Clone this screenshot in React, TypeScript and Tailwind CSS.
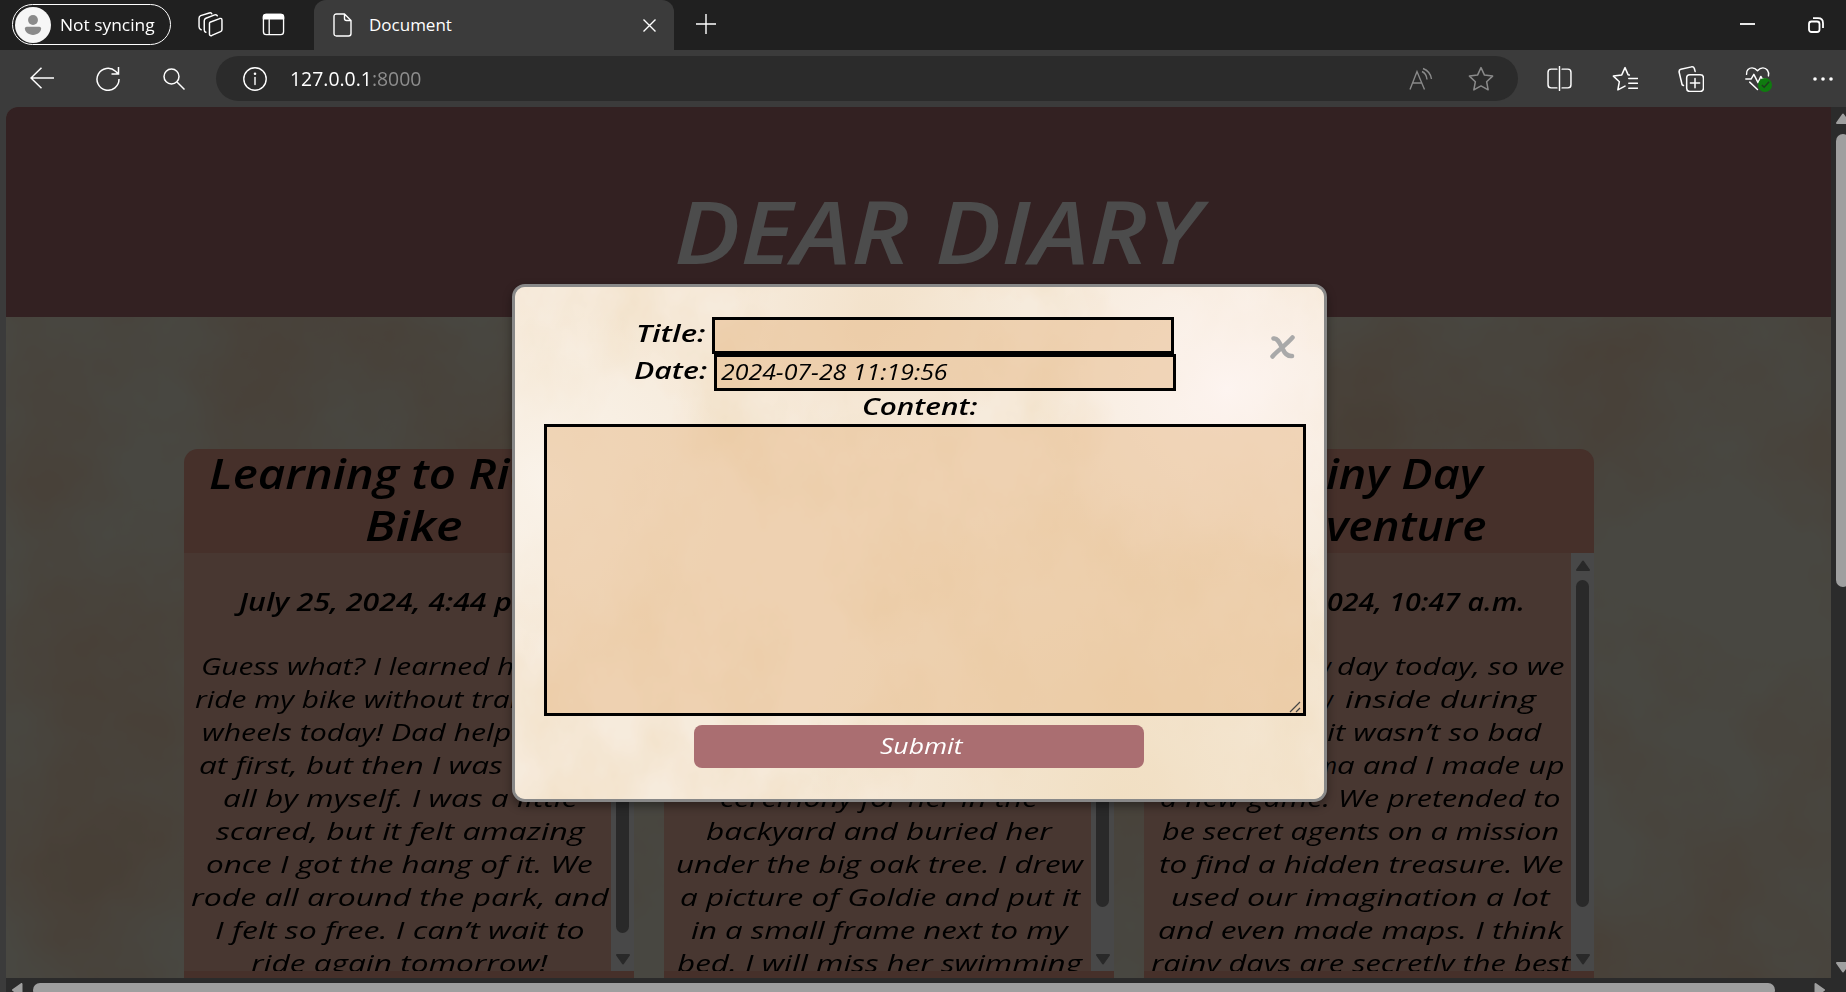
import { useLayoutEffect, useRef, type ReactNode } from "react";

type Seg = { t: string; w: number; x?: number; before?: string; after?: string };

/* Stretches one line of lettering to the given advance width. */
function Fit({ w, children }: { w: number; children: ReactNode }) {
  const ref = useRef<HTMLSpanElement>(null);
  useLayoutEffect(() => {
    const el = ref.current;
    if (el) el.style.transform = `scaleX(${w / el.offsetWidth})`;
  }, [w]);
  return (
    <span className="inline-block shrink-0 whitespace-pre" style={{ width: w }}>
      <span ref={ref} className="inline-block origin-left whitespace-pre">{children}</span>
    </span>
  );
}

function Line({ s, className }: { s: Seg; className: string }) {
  const side = s.before ? "justify-end" : s.after ? "justify-start" : "justify-center";
  return (
    <div className={`flex whitespace-pre ${side} ${className}`} style={s.before ? { paddingRight: s.x } : { paddingLeft: s.x }}>
      {s.before && <span>{s.before}</span>}
      <Fit w={s.w}>{s.t}</Fit>
      {s.after && <span>{s.after}</span>}
    </div>
  );
}

function Texture({ id, seed, matrix, freq }: { id: string; seed: number; matrix: string; freq: string }) {
  return (
    <svg className="pointer-events-none absolute inset-0 size-full" aria-hidden="true">
      <filter id={id} x="0" y="0" width="100%" height="100%" colorInterpolationFilters="sRGB">
        <feTurbulence type="fractalNoise" baseFrequency={freq} numOctaves="5" seed={seed} />
        <feColorMatrix type="matrix" values={matrix} />
      </filter>
      <rect width="100%" height="100%" filter={`url(#${id})`} />
    </svg>
  );
}

type Card = { head: Seg[]; date: Seg; lines: Seg[]; thumb: string };

const cards: Card[] = [
  {
    head: [{ t: "Learning to Ri", w: 301, x: 25, after: "de a" }, { t: "Bike", w: 98, x: 10 }],
    date: { t: "July 25, 2024, 4:44 p", w: 273, x: 55, after: ".m." },
    lines: [
      { t: "Guess what? I learned h", w: 313, x: 17, after: "ow to" },
      { t: "ride my bike without tra", w: 315, x: 11, after: "ining" },
      { t: "wheels today! Dad help", w: 309, x: 18, after: "ed me" },
      { t: "at first, but then I was", w: 304, x: 15, after: "  riding" },
      { t: "all by myself. I was a little", w: 354, x: 4 },
      { t: "scared, but it felt amazing", w: 368, x: 4 },
      { t: "once I got the hang of it. We", w: 387, x: 4 },
      { t: "rode all around the park, and", w: 418, x: 5 },
      { t: "I felt so free. I can’t wait to", w: 369, x: 4 },
      { t: "ride again tomorrow!", w: 296, x: 2 },
    ],
    thumb: "h-[353px]",
  },
  {
    head: [{ t: "Goodbye,", w: 200 }, { t: "Goldie", w: 140 }],
    date: { t: "July 26, 2024, 5:12 p.m.", w: 320 },
    lines: [
      { t: "Today was a sad day. My", w: 340 },
      { t: "goldfish, Goldie, died. I", w: 340 },
      { t: "came home from school", w: 340 },
      { t: "and found her. We had a", w: 340 },
      { t: "ceremony for her in the", w: 318, x: 3 },
      { t: "backyard and buried her", w: 346, x: 3 },
      { t: "under the big oak tree. I drew", w: 407, x: 3 },
      { t: "a picture of Goldie and put it", w: 400, x: 4 },
      { t: "in a small frame next to my", w: 377, x: 3 },
      { t: "bed. I will miss her swimming", w: 405, x: 4 },
    ],
    thumb: "h-[327px]",
  },
  {
    head: [{ t: "iny Day", w: 157, x: 111, before: "A Ra" }, { t: "venture", w: 161, x: 107, before: "Ad" }],
    date: { t: "024, 10:47 a.m.", w: 198, x: 46, before: "July 27, 2" },
    lines: [
      { t: "day today, so we", w: 227, x: 7, before: "It was a rainy " },
      { t: "inside during", w: 191, x: 35, before: "had to stay  " },
      { t: "it wasn’t so bad", w: 214, x: 30, before: "recess. But  " },
      { t: "a and I made up", w: 228, x: 6, before: "because Emm" },
      { t: "a new game. We pretended to", w: 401, x: 5 },
      { t: "be secret agents on a mission", w: 397, x: 6 },
      { t: "to find a hidden treasure. We", w: 404, x: 6 },
      { t: "used our imagination a lot", w: 379, x: 6 },
      { t: "and even made maps. I think", w: 405, x: 5 },
      { t: "rainy days are secretly the best", w: 420, x: 6 },
    ],
    thumb: "h-[327px]",
  },
];

function Tri({ className, d }: { className: string; d: string }) {
  return (
    <svg viewBox="0 0 14 11" className={className} fill="currentColor" stroke="currentColor" strokeWidth="2" strokeLinejoin="round">
      <path d={d} />
    </svg>
  );
}
const UP = "M7 1.5 13 10H1z";
const DOWN = "M7 9.5 13 1H1z";

function DiaryCard({ c }: { c: Card }) {
  return (
    <section className="flex h-[529px] w-[450px] shrink-0 flex-col overflow-hidden rounded-t-[14px] bg-[#46302a]">
      <header className="h-[104px] overflow-hidden text-[41px] font-semibold">
        {c.head.map((s) => <Line key={s.t} s={s} className="h-[52px] leading-[48px]" />)}
      </header>
      <div className="flex h-[418px] overflow-hidden">
        <div className="w-[427px] overflow-hidden bg-[#483932]/90 pt-[30px]">
          <Line s={c.date} className="h-[72px] text-[25px] leading-[36px] font-semibold" />
          {c.lines.map((s) => <Line key={s.t} s={s} className="h-[33px] text-[23.5px] leading-[23px]" />)}
        </div>
        <div className="flex w-[23px] flex-col items-center bg-[#484848] pt-[7px] pb-[6px] text-[#292929]">
          <Tri className="h-[11px] w-[14px] shrink-0" d={UP} />
          <div className={`mt-[9px] w-[13px] shrink-0 rounded-full bg-[#292929] ${c.thumb}`} />
          <Tri className="mt-auto h-[11px] w-[14px] shrink-0" d={DOWN} />
        </div>
      </div>
    </section>
  );
}

function Icon({ className, children, w = 24 }: { className?: string; children: ReactNode; w?: number }) {
  return (
    <svg viewBox={`0 0 ${w} 24`} className={`shrink-0 ${className ?? ""}`} fill="none" stroke="currentColor" strokeWidth="1.4" strokeLinecap="round" strokeLinejoin="round">
      {children}
    </svg>
  );
}
const STAR = "M12 1.5 15.2 8.4 22.7 9.3 17.2 14.5 18.6 22 12 18.4 5.4 22 6.8 14.5 1.3 9.3 8.8 8.4z";

function Chrome() {
  return (
    <>
      <div className="flex h-[50px] bg-[#202020] text-white">
        <div className="mt-[4px] ml-[12px] flex h-[41px] w-[159px] items-center rounded-full border-[1.5px] border-white pl-[2px]">
          <span className="flex size-[36px] items-center justify-center rounded-full bg-[#f6f6f6]">
            <svg viewBox="0 0 20 22" className="h-[22px] w-[18px]" fill="#8a8a8a"><circle cx="10" cy="5.5" r="5.5" /><path d="M1 15q0-2 2-2h14q2 0 2 2c0 4-4 7-9 7s-9-3-9-7z" /></svg>
          </span>
          <span className="ml-[9px]"><Fit w={95}><span className="font-['Open_Sans','Noto_Sans',sans-serif] text-[17px]">Not syncing</span></Fit></span>
        </div>
        <Icon className="mt-[12px] ml-[27px] size-[25px]">
          <path d="M11.500 9.800 20.800 6.300Q23 5.600 23 7.800V16.800Q23 18.300 21.600 18.900L13.300 22.500Q11 23.300 11 21V11.200Q11 10.200 11.500 9.800z" />
          <path d="M7.500 19.500Q6 19 6 17V8.500q0-1.800 1.600-2.500L16 2.800q2-.6 2.500.9M3 17Q1 16.300 1 14.200V6q0-1.800 1.600-2.500L10.800.9q2-.6 2.500.9" />
        </Icon>
        <Icon className="mt-[13px] ml-[39px] size-[23px]">
          <rect x="1.500" y="1.500" width="21" height="21" rx="3" /><path d="M1.500 6V4q0-2.500 2.500-2.500h16q2.500 0 2.500 2.500v2z" fill="currentColor" /><path d="M7.500 7v15" />
        </Icon>
        <div className="ml-[29px] flex h-[50px] w-[360px] items-center rounded-t-[12px] bg-[#3b3b3b]">
          <Icon className="ml-[19px] h-[24px] w-[19px]" w={19}><path d="M3.500 1H11.500L18 7.500V20.500Q18 23 15.500 23H3.500Q1 23 1 20.500V3.500Q1 1 3.500 1zM11.500 1V5.500q0 2 2 2H18" /></Icon>
          <span className="ml-[17px]"><Fit w={83}><span className="font-['Open_Sans','Noto_Sans',sans-serif] text-[17px]">Document</span></Fit></span>
          <svg viewBox="0 0 13 13" className="ml-[191px] size-[13px]" stroke="white" strokeWidth="1.400"><path d="m.5.5 12 12m0-12-12 12" /></svg>
        </div>
        <svg viewBox="0 0 20 20" className="mt-[14px] ml-[22px] size-[20px]" stroke="white" strokeWidth="1.400"><path d="M10 0v20M0 10h20" /></svg>
        <svg viewBox="0 0 15 16" className="mt-[16px] ml-auto h-[16px] w-[15px]" stroke="white" strokeWidth="1.800"><path d="M0 8h15" /></svg>
        <svg viewBox="0 0 16 16" className="mt-[17px] mr-[22px] ml-[53px] size-[16px]" fill="none" stroke="white" strokeWidth="1.800"><rect x="1" y="4.500" width="10.500" height="10.500" rx="2.500" /><path d="M5 1.200h5q5 0 5 5V11" /></svg>
      </div>
      <div className="flex h-[57px] items-center bg-[#3b3b3b] text-white">
        <svg viewBox="0 0 24 22" className="-mt-px ml-[30px] h-[22px] w-[24px]" fill="none" stroke="white" strokeWidth="1.500"><path d="M24 11H1M11.500.7 1 11l10.500 10.300" /></svg>
        <svg viewBox="0 0 24 24" className="ml-[42px] size-[24px]" fill="none" stroke="white" strokeWidth="1.500"><path d="M23 12A11 11 0 1 1 19.500 4.200L22.500 7M22.500 0v7h-7" /></svg>
        <svg viewBox="0 0 22 22" className="ml-[43px] size-[22px]" fill="none" stroke="white" strokeWidth="1.500"><circle cx="8.500" cy="8.500" r="7.500" /><path d="m14 14 7.500 7.500" /></svg>
        <div className="ml-[31px] flex h-[45px] w-[1302px] items-center rounded-full bg-[#2b2b2b]">
          <Icon className="ml-[27px] size-[24px]"><circle cx="12" cy="12" r="11.200" /><path d="M12 10.500v7" /><circle cx="12" cy="6.800" r=".6" fill="currentColor" /></Icon>
          <span className="ml-[23px]"><Fit w={131}><span className="font-['Open_Sans','Noto_Sans',sans-serif] text-[20px]">127.0.0.1<span className="text-[#8d8d8d]">:8000</span></span></Fit></span>
          <svg viewBox="0 0 24 24" className="ml-auto size-[24px]" fill="none" stroke="#8a8a8a" strokeWidth="1.400"><path d="m1 22.500 7-18 7.500 18M3.500 16h9.500M13 4.500q4.500 2 5 8M14 1.500q7.500 3 8.500 10.500" /></svg>
          <Icon className="mr-[24px] ml-[35px] size-[26px] text-[#8a8a8a]"><path d={STAR} /></Icon>
        </div>
        <Icon className="ml-[29px] size-[25px]"><path d="M9.500 3H4Q1 3 1 6v12q0 3 3 3h5.500M14.500 3H20q3 0 3 3v12q0 3-3 3h-5.500M12 .5v23" /></Icon>
        <Icon className="ml-[40px] size-[26px]"><path d="M16 8.300 14.800 8 12 1.500 9 8.200 1.300 9.300 6.800 14.500 5.400 22 12 18.600M15.500 11.500h8M15.500 16h8M15.500 20.500h8" /></Icon>
        <Icon className="ml-[40px] size-[26px]"><rect x="8" y="8" width="15.500" height="15.500" rx="3" /><path d="M15.700 11.500v8.500M11.500 15.700H20M5 18 3.800 17.300 1 5.500Q.8 3.500 2.600 3L12.500.8q2-.3 2.600 1.500l.7 2.700" /></Icon>
        <div className="relative ml-[41px] size-[26px]">
          <Icon className="size-[25px]"><path d="M1.500 8C1 4 4 1.800 6.800 1.800Q9.700 1.800 12 4.500q2.300-2.700 5.200-2.700c3.500 0 6.300 3.400 5.300 7.700M.8 12.500h5l2.700-4.500 4 8 2.700-6 1.500 2.500h3M4.500 15.500 12 22.500" /></Icon>
          <span className="absolute top-[12px] left-[13px] flex size-[14px] items-center justify-center rounded-full bg-[#0f7b0f]"><svg viewBox="0 0 10 10" className="size-[9px]" fill="none" stroke="#1f3a1f" strokeWidth="1.600"><path d="m1 5.500 2.500 2.500L9 2" /></svg></span>
        </div>
        <svg viewBox="0 0 20 4" className="ml-[42px] h-[4px] w-[20px] shrink-0" fill="white"><circle cx="2" cy="2" r="1.800" /><circle cx="10" cy="2" r="1.800" /><circle cx="18" cy="2" r="1.800" /></svg>
      </div>
    </>
  );
}

const FIELD = "border-[3px] border-black bg-[#e5b785]/50";

function Modal() {
  return (
    <div className="absolute top-[284px] left-[512px] h-[518px] w-[815px] overflow-hidden rounded-[13px] border-[3px] border-[#888] bg-[#f6eadb] text-black shadow-[0_4px_10px_rgba(0,0,0,.4)]">
      <Texture id="paper" seed={8} freq="0.012 0.009" matrix="0 0 0 0 .92  0 0 0 0 .82  0 0 0 0 .66  0 2 0 0 -.8" />
      <div className="absolute inset-0 bg-[#f7ebdc]/60" />
      <div className="absolute inset-0 bg-[radial-gradient(circle_at_88%_20%,#fdf4f0_0,transparent_24%),radial-gradient(circle_at_4%_38%,#faf3ea_0,transparent_22%),radial-gradient(circle_at_75%_100%,#f1dfc3_0,transparent_40%),radial-gradient(circle_at_45%_5%,#f3e2cb_0,transparent_22%)]" />
      <div className="relative flex h-full flex-col">
        <div className="mt-[30px] flex h-[37px] items-start pl-[121px]">
          <span className="text-[24px] leading-[32px] font-semibold"><Fit w={70}>Title:</Fit></span>
          <div className={`ml-[6px] h-[37px] w-[462px] ${FIELD}`} />
        </div>
        <div className="flex h-[37px] items-start pl-[119px]">
          <span className="text-[24px] leading-[32px] font-semibold"><Fit w={73}>Date:</Fit></span>
          <div className={`ml-[7px] h-[37px] w-[462px] pl-[4px] text-[21.5px] leading-[29px] ${FIELD}`}><Fit w={227}>2024-07-28 11:19:56</Fit></div>
        </div>
        <div className="h-[33px] pl-[347px] text-[24px] leading-[29px] font-semibold"><Fit w={115}>Content:</Fit></div>
        <div className={`ml-[29px] flex h-[292px] w-[762px] items-end justify-end ${FIELD}`}>
          <svg viewBox="0 0 12 12" className="mr-[2px] size-[12px]" stroke="#444" strokeWidth="1.200"><path d="M1 11 11 1M7 11l4-4" /></svg>
        </div>
        <div className="mt-[9px] ml-[179px] flex h-[43px] w-[450px] justify-center rounded-[8px] bg-[#aa6e71] text-[22px] leading-[40px] text-white"><span className="pl-[3px]"><Fit w={82}>Submit</Fit></span></div>
      </div>
      <svg viewBox="0 0 26 24" className="absolute top-[48px] left-[755px] h-[24px] w-[26px]" fill="none" stroke="#a9a9a9" strokeWidth="4.500" strokeLinecap="round"><path d="M2.500 21.500C7 16 15 11 22.500 2.500M3.500 3.500C8 2.500 10 9 13 14.500Q16 21.500 22 21" /></svg>
    </div>
  );
}

export default function App() {
  return (
    <main className="relative h-[992px] w-[1846px] overflow-hidden bg-[#3b3b3b] font-['Open_Sans','Noto_Sans',sans-serif]">
      <Chrome />
      <div className="flex h-[871px] pl-[6px]">
        <div className="relative w-[1825px] overflow-hidden rounded-tl-[12px] bg-[#484741] text-black italic">
          <Texture id="page" seed={3} freq="0.005 0.005" matrix="0 0 0 0 .28  0 0 0 0 .245  0 0 0 0 .21  0 2 0 0 -.75" />
          <div className="relative">
            <h1 className="flex h-[210px] justify-center bg-[#332122] pt-[64px] text-[87px] leading-[118px] font-semibold text-[#4c4c4c]"><span className="pl-[36px]"><Fit w={526}>DEAR DIARY</Fit></span></h1>
            <div className="mt-[132px] flex gap-[30px] pl-[178px]">
              {cards.map((c) => <DiaryCard key={c.date.t} c={c} />)}
            </div>
          </div>
        </div>
        <div className="flex w-[15px] shrink-0 flex-col items-start overflow-hidden bg-[#2b2b2b] pt-[6px] pl-[5px] text-[#9f9f9f]">
          <Tri className="h-[11px] w-[14px] shrink-0" d={UP} />
          <div className="mt-[10px] h-[453px] w-[14px] shrink-0 rounded-full bg-[#9f9f9f]" />
          <Tri className="mt-auto mb-[5px] h-[11px] w-[14px] shrink-0" d={DOWN} />
        </div>
      </div>
      <div className="ml-[6px] flex h-[14px] items-start overflow-hidden bg-[#2b2b2b] pt-[5px] text-[#9f9f9f]">
        <Tri className="ml-[4px] h-[14px] w-[14px] shrink-0 -rotate-90" d={UP} />
        <div className="ml-[9px] h-[14px] w-[1742px] shrink-0 rounded-[7px] bg-[#9f9f9f]" />
        <Tri className="ml-[38px] h-[14px] w-[14px] shrink-0 rotate-90" d={UP} />
      </div>
      <div className="italic"><Modal /></div>
    </main>
  );
}
